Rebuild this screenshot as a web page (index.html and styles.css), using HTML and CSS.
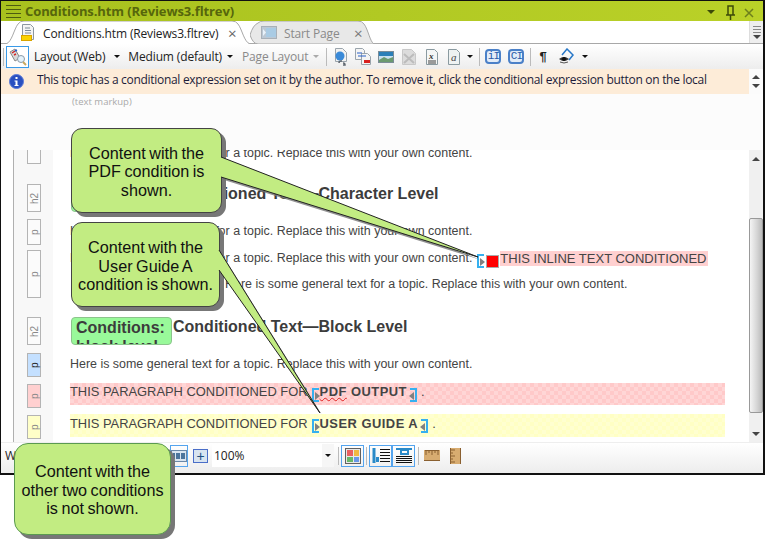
FILE: index.html
```html
<!DOCTYPE html>
<html lang="en">
<head>
    <meta charset="UTF-8">
    <title>Conditions.htm</title>
    <link rel="stylesheet" href="styles.css">
</head>
<body>
<div class="page">
    <div class="window">
        <div class="title-bar">
            <div class="menu-lines"><i></i><i></i><i></i><i></i></div>
            <span class="title-text">Conditions.htm (Reviews3.fltrev)</span>
            <div class="title-btns">
                <svg width="50" height="16" viewBox="0 0 50 16">
                    <path d="M0 6h8l-4 4z" fill="#3c4a08"/>
                    <path d="M21 2h5v9h-5zM23.500 11v5M19 11h9" fill="none" stroke="#3c4a08" stroke-width="1.500"/>
                    <path d="M38 5l8 8M46 5l-8 8" stroke="#6d7f1c" stroke-width="1.500"/>
                </svg>
            </div>
        </div>

        <div class="tab-bar">
            <div class="tab tab-on">
                <svg class="tab-shape" viewBox="0 0 244 23" preserveAspectRatio="none">
                    <path d="M0 23C6 21 8 8 12 3Q14 0 18 0H226Q230 0 232 3C236 8 238 21 244 23" fill="#fff" stroke="#a8a8a8"/>
                </svg>
                <svg class="tab-icon" width="14" height="17" viewBox="0 0 14 17">
                    <path d="M1.500 .5h8l3 3v12h-11z" fill="#f4f4f4" stroke="#8c96a0"/>
                    <path d="M4 4h5M4 6.500h6M4 9h6" stroke="#7d8a96"/>
                    <rect x="0.500" y="11.500" width="10" height="5" fill="#fbd200" stroke="#d8a400"/>
                </svg>
                <span class="tab-label">Conditions.htm (Reviews3.fltrev)</span>
                <span class="tab-x">×</span>
            </div>
            <div class="tab tab-off">
                <svg class="tab-shape" viewBox="0 0 124 23" preserveAspectRatio="none">
                    <path d="M0 14Q3 4 8 2Q10 0 14 0H108Q112 0 114 3C118 8 120 21 124 23H8Q3 23 0 14Z" fill="#e8e8e8" stroke="#a8a8a8"/>
                </svg>
                <svg class="tab-icon-off" width="16" height="13" viewBox="0 0 16 13">
                    <rect x=".5" y=".5" width="15" height="12" fill="#bcc8d4" stroke="#a8b0b8"/>
                    <rect x="5" y="2" width="10" height="9" fill="#a9cbe4"/>
                    <path d="M2 3l3 3.500-3 3.500z" fill="#e8f2fa"/>
                </svg>
                <span class="tab-label-off">Start Page</span>
                <span class="tab-x-off">×</span>
            </div>
            <div class="tab-fill"></div>
            <div class="side-btn">
                <i></i><i></i><i></i>
                <b class="arrow-down"></b>
            </div>
        </div>

        <div class="tool-bar">
            <span class="sep sep-first"></span>
            <span class="tool-on">
                <svg width="18" height="18" viewBox="0 0 18 18">
                    <path d="M1 4l5-3 5 9-5 3z" fill="#d8d8d8" stroke="#888"/>
                    <path d="M3 5l3-2M5 7l2-1" stroke="#d02828" stroke-width="1.500"/>
                    <path d="M6 3l2-1" stroke="#2860c8" stroke-width="1.500"/>
                    <circle cx="12" cy="11" r="3.500" fill="#e4f2fa" stroke="#8a9aa8"/>
                    <path d="M14 14l3 3" stroke="#c8a860" stroke-width="2"/>
                </svg>
            </span>
            <span class="tool-text t-layout">Layout (Web)</span>
            <b class="drop d-layout"></b>
            <span class="tool-text t-medium">Medium (default)</span>
            <b class="drop d-medium"></b>
            <span class="tool-text t-page">Page Layout</span>
            <b class="drop drop-off d-page"></b>
            <span class="sep sep-a"></span>
            <svg class="ico i-1" width="14" height="18" viewBox="0 0 14 18">
                <path d="M1.500 .5h7l4 4v9h-11z" fill="#f2f2f2" stroke="#9aa4ac"/>
                <circle cx="6" cy="8" r="4.500" fill="#3a8ad8"/>
                <path d="M5 15a2 2 0 012-2h1M9 15a2 2 0 012 2h-2" fill="none" stroke="#606870" stroke-width="1.500"/>
            </svg>
            <svg class="ico i-2" width="16" height="17" viewBox="0 0 16 17">
                <path d="M.5 .5h7l2 2v9h-9z" fill="#f4f4f4" stroke="#9aa4ac"/>
                <path d="M6.500 5.500h6l3 3v8h-9z" fill="#f4f4f4" stroke="#9aa4ac"/>
                <path d="M2 5h5M3 8h8" stroke="#2860c8"/>
                <rect x="9" y="12" width="6" height="3" fill="#d82020"/>
            </svg>
            <svg class="ico i-3" width="16" height="12" viewBox="0 0 16 12">
                <rect x=".5" y=".5" width="15" height="11" fill="#c8e0f0" stroke="#7a8c98"/>
                <rect x="1" y="1" width="14" height="4" fill="#2a7fb8"/>
                <path d="M1 9l5-3 4 2 5-2v5H1z" fill="#6a9a70"/>
            </svg>
            <svg class="ico i-4" width="14" height="16" viewBox="0 0 14 16">
                <path d="M.5 .5h9l4 4v11H.5z" fill="#dcdcdc" stroke="#c8c8c8"/>
                <path d="M2 5l10 9M12 5L2 14" stroke="#bcbcbc" stroke-width="2"/>
            </svg>
            <svg class="ico i-5" width="12" height="16" viewBox="0 0 12 16">
                <path d="M.5 .5h8l3 3v12H.5z" fill="#f4f6f6" stroke="#8a9aa0"/>
                <text x="3" y="10" class="ico-text">x</text>
                <path d="M2 12h8M2 14h8" stroke="#404040"/>
            </svg>
            <svg class="ico i-6" width="12" height="16" viewBox="0 0 12 16">
                <path d="M.5 .5h8l3 3v12H.5z" fill="#eef2f2" stroke="#8a9aa0"/>
                <text x="3" y="12" class="ico-text-a">a</text>
            </svg>
            <b class="drop d-a"></b>
            <span class="sep sep-b"></span>
            <span class="cap-btn c-i">iI</span>
            <span class="cap-btn c-c">CI</span>
            <span class="sep sep-c"></span>
            <span class="pilcrow">¶</span>
            <svg class="ico i-eye" width="17" height="17" viewBox="0 0 17 17">
                <path d="M3 7l5-6 6 6-4 5" fill="none" stroke="#2878c8" stroke-width="1.500"/>
                <path d="M0 11q5-4 10 0-5 4-10 0z" fill="#333"/>
                <circle cx="5" cy="11" r="2" fill="#111"/>
                <path d="M1 14q4 2 8 0" fill="none" stroke="#555"/>
            </svg>
            <b class="drop d-eye"></b>
        </div>

        <div class="notice">
            <svg class="info-ico" width="15" height="15" viewBox="0 0 15 15">
                <circle cx="7.500" cy="7.500" r="7" fill="#2a50c0" stroke="#5a7ad8"/>
                <rect x="6.500" y="3" width="2" height="2" fill="#fff"/>
                <path d="M5.500 6.500h3v4.500h1v1h-4v-1h1v-3.500h-1z" fill="#fff"/>
            </svg>
            <span class="notice-text">This topic has a conditional expression set on it by the author. To remove it, click the conditional expression button on the local</span>
            <div class="notice-scroll">
                <b class="arrow-up"></b>
                <b class="arrow-down"></b>
            </div>
        </div>

        <div class="markup-bar">(text markup)</div>

        <div class="editor">
            <div class="strip"></div>
            <div class="gutter">
                <span class="tag tag-0"></span>
                <span class="tag tag-h m-20">h2</span>
                <span class="tag tag-p m-7">p</span>
                <span class="tag tag-tall m-5">p</span>
                <span class="tag tag-h m-19">h2</span>
                <span class="tag tag-p tag-blue m-8">p</span>
                <span class="tag tag-p tag-pink m-7">p</span>
                <span class="tag tag-p tag-yellow m-7">p</span>
            </div>
            <div class="doc">
                <p class="line first">Here is some general text for a topic. Replace this with your own content.</p>
                <h2 class="head m-23"><span class="badge">Conditions: block level</span>Conditioned Text—Character Level</h2>
                <p class="line m-11">Here is some general text for a topic. Replace this with your own content.</p>
                <p class="line m-11">Here is some general text for a topic. Replace this with your own content.<span class="mark mark-inline"></span><span class="red-box"></span><span class="inline-cond">THIS INLINE TEXT CONDITIONED</span></p>
                <p class="line m-10 indented">Here is some general text for a topic. Replace this with your own content.</p>
                <h2 class="head m-25"><span class="badge">Conditions: block level</span>Conditioned Text—Block Level</h2>
                <p class="line m-11">Here is some general text for a topic. Replace this with your own content.</p>
                <p class="cond cond-pink m-11">THIS PARAGRAPH CONDITIONED FOR<span class="mark mark-l"></span><b class="cond-b"><span class="typo">PDF</span> OUTPUT</b><span class="mark mark-r"></span><span class="dot">.</span></p>
                <p class="cond cond-yellow m-9">THIS PARAGRAPH CONDITIONED FOR<span class="mark mark-l"></span><b class="cond-b">USER GUIDE A</b><span class="mark mark-r"></span><span class="dot">.</span></p>
            </div>
            <div class="v-scroll">
                <div class="v-btn"><b class="arrow-up"></b></div>
                <div class="v-track"><div class="v-thumb"></div></div>
                <div class="v-btn"><b class="arrow-down"></b></div>
            </div>
        </div>

        <div class="status-bar">
            <span class="status-w">W</span>
            <span class="zoom-btn">
                <svg width="16" height="12" viewBox="0 0 16 12">
                    <rect x=".5" y=".5" width="15" height="11" fill="#d8e4f0" stroke="#6a88a8"/>
                    <path d="M3 3v6M6 3v6M8 3v6M11 3v6M13 3v6" stroke="#1c4f80" stroke-width="1.500"/>
                </svg>
            </span>
            <span class="plus-btn">+</span>
            <div class="zoom-select">
                <span>100%</span>
                <span class="zoom-arrow"><b class="drop"></b></span>
            </div>
            <span class="sep"></span>
            <span class="stat-btn">
                <svg width="16" height="16" viewBox="0 0 16 16">
                    <rect x=".5" y=".5" width="15" height="15" fill="#e8e8e8" stroke="#606060"/>
                    <rect x="2" y="2" width="6" height="6" fill="#e86060"/>
                    <rect x="9" y="2" width="5" height="6" fill="#f0b840"/>
                    <rect x="2" y="9" width="6" height="5" fill="#68b868"/>
                    <rect x="9" y="9" width="5" height="5" fill="#6898e8"/>
                </svg>
            </span>
            <span class="sep"></span>
            <div class="stat-pair">
                <span class="stat-btn">
                    <svg width="18" height="16" viewBox="0 0 18 16">
                        <path d="M2 0v15" stroke="#2a8ac8" stroke-width="3"/>
                        <path d="M4 9h3v5H4z" fill="#2a8ac8"/>
                        <path d="M8 1.500h10M8 4.500h10M8 7.500h10M8 10.500h10M8 13.500h10" stroke="#111"/>
                    </svg>
                </span>
                <span class="stat-btn">
                    <svg width="18" height="16" viewBox="0 0 18 16">
                        <path d="M1 1h16" stroke="#2a8ac8" stroke-width="2"/>
                        <path d="M6 2h7v4H6z" fill="none" stroke="#2a8ac8" stroke-width="2"/>
                        <path d="M1 8.500h16M1 10.500h16M1 12.500h16M1 14.500h16" stroke="#111"/>
                    </svg>
                </span>
            </div>
            <span class="sep"></span>
            <svg class="ruler-h" width="16" height="11" viewBox="0 0 16 11">
                <rect width="16" height="11" fill="#d8ac70"/>
                <path d="M1 .5h14M2 1v4M5 1v2M8 1v4M11 1v2M14 1v4M0 10.500h16" stroke="#8a6030"/>
            </svg>
            <svg class="ruler-v" width="11" height="16" viewBox="0 0 11 16">
                <rect width="11" height="16" fill="#d8ac70"/>
                <path d="M.5 0v16M1 2h4M1 5h2M1 8h4M1 11h2M1 14h4M10.500 0v16" stroke="#8a6030"/>
            </svg>
        </div>
    </div>

    <!-- callouts -->
    <div class="callout call-1">Content with the PDF condition is shown.</div>
    <div class="callout call-2">Content with the User Guide A condition is shown.</div>
    <div class="callout call-3">Content with the other two conditions is not shown.</div>
    <svg class="tails" width="765" height="550" viewBox="0 0 765 550">
        <polygon points="224,180 481,260 224,160" fill="#777" opacity=".8"/>
        <polygon points="221,157 478,257 221,177" fill="#c2ec82"/>
        <path d="M221 157L478 257L221 177" fill="none" stroke="#222" stroke-width="1"/>
        <polygon points="222,272 322,415 222,254" fill="#777" opacity=".8"/>
        <polygon points="219,250 320,413 219,270" fill="#c2ec82"/>
        <path d="M219 250L320 413L219 270" fill="none" stroke="#222" stroke-width="1"/>
    </svg>
</div>
</body>
</html>
```

FILE: styles.css
```css
*{
    margin: 0;
    padding: 0;
    box-sizing: border-box;
}
html,body{
    width: 765px;
    height: 550px;
    overflow: hidden;
    background: #fff;
}
body{
    font-family: "Open Sans", "Noto Sans", sans-serif;
}
.page{
    width: 765px;
    height: 550px;
    position: relative;
}
.window{
    height: 475px;
    display: flex;
    flex-direction: column;
    border: 1px solid #111;
    border-width: 1px 2px 2px 1px;
    background: #fff;
}

/* title */
.title-bar{
    height: 20px;
    flex: none;
    display: flex;
    align-items: center;
    padding-left: 5px;
    background: linear-gradient(90deg, #a8c11e, #bad128);
}
.menu-lines{
    width: 15px;
    height: 13px;
    display: flex;
    flex-direction: column;
    justify-content: space-between;
    margin-right: 4px;
}
.menu-lines i{
    display: block;
    height: 1px;
    background: #4e5c10;
}
.title-text{
    font-size: 13px;
    font-weight: 700;
    letter-spacing: -.1px;
    color: #56660c;
    white-space: nowrap;
}
.title-btns{
    margin-left: auto;
    margin-right: 6px;
    height: 16px;
}

/* tabs */
.tab-bar{
    height: 23px;
    flex: none;
    display: flex;
    background: #fff;
    border-bottom: 1px solid #a8a8a8;
}
.tab{
    height: 23px;
    position: relative;
    display: flex;
    align-items: center;
    flex: none;
    font-size: 12px;
    letter-spacing: -.15px;
    white-space: nowrap;
}
.tab-on{
    width: 244px;
    margin-left: 5px;
    z-index: 2;
}
.tab-off{
    width: 124px;
    color: #8a8a8a;
}
.tab-shape{
    position: absolute;
    left: 0;
    top: 0;
    width: 100%;
    height: 23px;
}
.tab-icon, .tab-label, .tab-x, .tab-icon-off, .tab-label-off, .tab-x-off{
    position: relative;
    flex: none;
}
.tab-icon{
    margin-left: 15px;
}
.tab-label{
    width: 169px;
    margin: 2px 0 0 8px;
    color: #222;
}
.tab-x{
    margin-left: 16px;
    color: #666;
    font-size: 15px;
}
.tab-icon-off{
    margin-left: 11px;
}
.tab-label-off{
    width: 62px;
    margin: 2px 0 0 7px;
}
.tab-x-off{
    margin-left: 8px;
    color: #777;
    font-size: 15px;
}
.tab-fill{
    flex: 1;
}
.side-btn{
    width: 14px;
    flex: none;
    display: flex;
    flex-direction: column;
    align-items: center;
    gap: 2px;
    padding-top: 5px;
    background: #eee;
    border-left: 1px solid #ddd;
}
.side-btn i{
    display: block;
    width: 8px;
    height: 1px;
    background: #888;
}
.arrow-up{
    display: block;
    width: 0;
    height: 0;
    border: 4px solid transparent;
    border-top: 0;
    border-bottom-color: #444;
}
.arrow-down{
    display: block;
    width: 0;
    height: 0;
    border: 4px solid transparent;
    border-bottom: 0;
    border-top-color: #444;
}

/* toolbar */
.tool-bar{
    height: 25px;
    flex: none;
    display: flex;
    align-items: center;
    padding-left: 2px;
    background: linear-gradient(#fff, #ededed);
    font-size: 12px;
    letter-spacing: -.15px;
    color: #222;
    white-space: nowrap;
}
.tool-text{
    padding-bottom: 1px;
}
.sep{
    display: block;
    width: 1px;
    height: 18px;
    background: #bbb;
    flex: none;
}
.tool-on{
    width: 23px;
    height: 22px;
    margin-left: 2px;
    display: flex;
    align-items: center;
    justify-content: center;
    border: 1px solid #3a9ae8;
    background: #fff;
    flex: none;
}
.drop{
    display: block;
    width: 0;
    height: 0;
    flex: none;
    border: 3px solid transparent;
    border-bottom: 0;
    border-top: 3px solid #111;
}
.drop-off{
    border-top-color: #aaa;
}
.t-layout{
    margin-left: 5px;
}
.d-layout{
    margin-left: 9px;
}
.t-medium{
    margin-left: 8px;
}
.d-medium{
    margin-left: 5px;
}
.t-page{
    margin-left: 9px;
    color: #8a8a8a;
}
.d-page{
    margin-left: 5px;
}
.sep-a{
    margin-left: 7px;
}
.ico{
    flex: none;
}
.i-1{
    margin-left: 7px;
}
.i-2{
    margin-left: 7px;
}
.i-3{
    margin-left: 7px;
}
.i-4{
    margin-left: 8px;
}
.i-5{
    margin-left: 10px;
}
.i-6{
    margin-left: 10px;
}
.ico-text{
    font: italic 700 9px "Liberation Serif", serif;
    fill: #333;
}
.ico-text-a{
    font: italic 11px "Liberation Serif", serif;
    fill: #444;
}
.d-a{
    margin-left: 7px;
}
.sep-b{
    margin-left: 6px;
}
.cap-btn{
    width: 16px;
    height: 15px;
    margin-left: 5px;
    border: 2px solid #4a80c8;
    border-radius: 4px;
    background: #e2ecf8;
    color: #2a5ca8;
    font: 11px/11px "Liberation Mono", monospace;
    letter-spacing: -1px;
    text-align: center;
    flex: none;
}
.c-c{
    margin-left: 7px;
}
.sep-c{
    margin-left: 6px;
}
.pilcrow{
    margin-left: 8px;
    width: 10px;
    font: 700 13px "Liberation Sans", sans-serif;
    color: #222;
}
.i-eye{
    margin-left: 10px;
}
.d-eye{
    margin-left: 6px;
}

/* notice */
.notice{
    height: 25px;
    flex: none;
    display: flex;
    align-items: center;
    padding-left: 8px;
    background: #fdecd8;
    font-size: 12px;
    letter-spacing: -.3px;
    color: #1c1c3a;
}
.info-ico{
    flex: none;
}
.notice-text{
    margin-left: 13px;
    padding-bottom: 4px;
    flex: 1;
    min-width: 0;
    white-space: nowrap;
    overflow: hidden;
}
.notice-scroll{
    width: 14px;
    height: 25px;
    flex: none;
    display: flex;
    flex-direction: column;
    align-items: center;
    justify-content: center;
    gap: 5px;
    background: #fbfbfb;
}
.markup-bar{
    height: 56px;
    flex: none;
    padding: 1px 0 0 71px;
    background: #fcfcfc;
    font-size: 9.500px;
    color: #aaa;
}

/* editor */
.editor{
    flex: 1;
    min-height: 0;
    display: flex;
    background: #fff;
    overflow: hidden;
}
.strip{
    width: 13px;
    flex: none;
    border-right: 1px solid #b0b0b0;
}
.gutter{
    width: 39px;
    flex: none;
    background: #f8f8f8;
    padding-left: 13px;
    display: flex;
    flex-direction: column;
}
.tag{
    display: flex;
    align-items: center;
    justify-content: center;
    width: 14px;
    height: 24px;
    flex: none;
    border: 1px solid #b4b4b4;
    background: #fbfbfb;
    color: #888;
    font: 10px "Liberation Sans", sans-serif;
    writing-mode: vertical-rl;
    transform: rotate(180deg);
}
.tag-0{
    height: 16px;
    margin-top: -2px;
}
.tag-h{
    height: 28px;
}
.tag-p{
    height: 26px;
}
.tag-tall{
    height: 48px;
}
.tag-blue{
    height: 24px;
    background: #c4e0ff;
    color: #222;
}
.tag-pink{
    height: 24px;
    background: #ffd0d0;
}
.tag-yellow{
    height: 24px;
    background: #ffffc8;
}
.m-5{ margin-top: 5px; }
.m-7{ margin-top: 7px; }
.m-8{ margin-top: 8px; }
.m-9{ margin-top: 9px; }
.m-10{ margin-top: 10px; }
.m-11{ margin-top: 11px; }
.m-19{ margin-top: 19px; }
.m-20{ margin-top: 20px; }
.m-23{ margin-top: 23px; }
.m-25{ margin-top: 25px; }

.doc{
    flex: 1;
    min-width: 0;
    padding: 0 24px 0 17px;
    font: 12.450px/16px "Liberation Sans", Arial, sans-serif;
    color: #444;
    white-space: nowrap;
}
.line{
    height: 16px;
    display: flex;
    align-items: center;
}
.first{
    margin-top: -5px;
}
.indented{
    padding-left: 155px;
}
.head{
    height: 28px;
    display: flex;
    align-items: flex-start;
    font-size: 16px;
    line-height: 19px;
    font-weight: 700;
    color: #3c3c3c;
}
.badge{
    display: block;
    width: 101px;
    height: 28px;
    margin: 0 1px 0 1px;
    padding-left: 4px;
    overflow: hidden;
    white-space: normal;
    background: #99f99a;
    border: 1px solid #8cc48c;
    border-radius: 4px;
}
.mark{
    display: inline-block;
    position: relative;
    width: 7px;
    height: 14px;
    flex: none;
    border: 2px solid #35b0f0;
    border-right: 0;
}
.mark::after{
    content: "";
    position: absolute;
    left: 1px;
    top: 2px;
    border: 4px solid transparent;
    border-right: 0;
    border-left: 5px solid #808080;
}
.mark-inline{
    margin: 6px 0 0 5px;
}
.mark-l{
    margin: 5px 0 0 4px;
}
.mark-r{
    margin: 5px 0 0 3px;
    border: 2px solid #35b0f0;
    border-left: 0;
}
.mark-r::after{
    left: auto;
    right: 1px;
    border: 4px solid transparent;
    border-left: 0;
    border-right: 5px solid #808080;
}
.red-box{
    display: block;
    width: 13px;
    height: 13px;
    margin: 6px 0 0 2px;
    flex: none;
    background: #f00;
    border: 1px solid #aaa;
}
.inline-cond{
    margin: 0 0 0 1px;
    padding: 0 2px 0 0;
    height: 15px;
    line-height: 15px;
    font-size: 13px;
    background: #ffd0d0;
}
.cond{
    display: flex;
    align-items: center;
    width: 655px;
    height: 22px;
    padding-bottom: 4px;
    font-size: 12.900px;
}
.cond-pink{
    background: repeating-conic-gradient(#ffc9c9 0 25%, #ffd6d6 0 50%) 0 0/8px 8px;
}
.cond-yellow{
    height: 23px;
    background: repeating-conic-gradient(#ffffc4 0 25%, #ffffd0 0 50%) 0 0/8px 8px;
}
.cond-b{
    letter-spacing: .5px;
    margin-left: 1px;
}
.typo{
    text-decoration: underline wavy #e02020 1px;
}
.dot{
    margin-left: 4px;
}
.v-scroll{
    width: 14px;
    flex: none;
    display: flex;
    flex-direction: column;
    background: #f0f0f0;
}
.v-btn{
    height: 17px;
    display: flex;
    align-items: center;
    justify-content: center;
    flex: none;
}
.v-track{
    flex: 1;
    min-height: 0;
    padding: 51px 0 12px;
}
.v-thumb{
    height: 100%;
    border: 1px solid #999;
    border-radius: 2px;
    background: linear-gradient(90deg, #f4f4f4, #d4d4d4 60%, #bbb);
}

/* status */
.status-bar{
    flex: none;
    height: 31px;
    display: flex;
    align-items: center;
    padding: 0 0 5px 4px;
    background: linear-gradient(#fff, #ededed);
    border-top: 1px solid #eee;
}
.status-w{
    width: 165px;
    font-size: 12px;
    color: #222;
}
.zoom-btn{
    width: 18px;
    height: 22px;
    display: flex;
    align-items: center;
    justify-content: center;
    border: 1px solid #54a4ee;
    flex: none;
}
.plus-btn{
    width: 15px;
    height: 14px;
    margin-left: 5px;
    border: 1px solid #4a6ec8;
    background: #d8e4f0;
    color: #1c4f80;
    font: 14px/12px "Liberation Sans", sans-serif;
    text-align: center;
    flex: none;
}
.zoom-select{
    width: 122px;
    height: 23px;
    margin: 0 4px;
    display: flex;
    align-items: center;
    justify-content: space-between;
    padding-left: 2px;
    background: #fff;
    font-size: 12px;
    color: #222;
    flex: none;
}
.zoom-arrow{
    width: 12px;
    height: 23px;
    display: flex;
    align-items: center;
    justify-content: center;
    background: #f6f6f6;
}
.stat-btn{
    display: flex;
    align-items: center;
    justify-content: center;
    width: 23px;
    height: 22px;
    margin: 0 2px;
    border: 1px solid #54a4ee;
    flex: none;
}
.stat-pair{
    display: flex;
    margin: 0 3px 0 2px;
}
.stat-pair .stat-btn{
    margin: 0;
}
.ruler-h{
    margin-left: 5px;
    flex: none;
}
.ruler-v{
    margin-left: 10px;
    flex: none;
}

/* callouts sit over the window */
.callout{
    position: absolute;
    display: flex;
    align-items: center;
    justify-content: center;
    text-align: center;
    background: #c2ec82;
    border: 1px solid #444;
    border-radius: 11px;
    box-shadow: 4px 4px 0 #777;
    font: 16.200px/18.500px "Liberation Sans", Arial, sans-serif;
    word-spacing: -1px;
    color: #111;
}
.call-1{
    left: 71px;
    top: 128px;
    width: 151px;
    height: 85px;
    padding: 2px 15px 0;
}
.call-2{
    left: 71px;
    top: 222px;
    width: 149px;
    height: 85px;
    padding: 3px 4px 0;
}
.call-3{
    left: 14px;
    top: 443px;
    width: 157px;
    height: 92px;
    padding: 2px 4px 0;
    border-color: #5a9a50;
    border-radius: 14px;
}
.tails{
    position: absolute;
    left: 0;
    top: 0;
    pointer-events: none;
}
```
